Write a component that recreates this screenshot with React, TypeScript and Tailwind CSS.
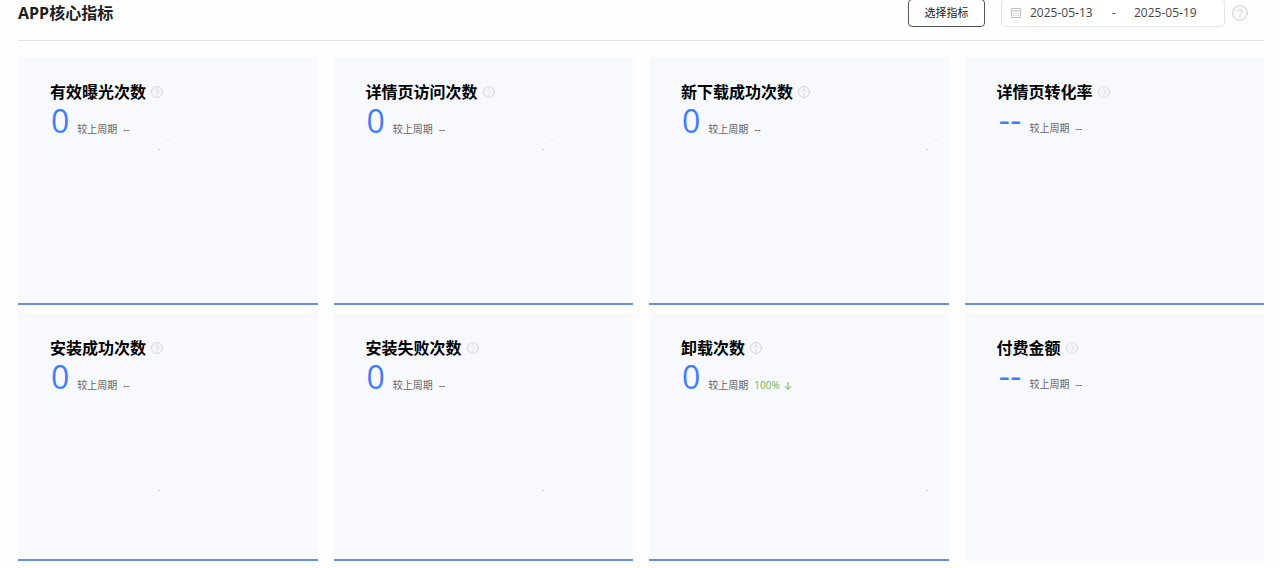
import React from 'react';

type Metric = {
  name: string;
  value: string;
  change: string;
  down?: boolean;
  hasLine: boolean;
};

const metrics: Metric[] = [
  { name: '有效曝光次数', value: '0', change: '--', hasLine: true },
  { name: '详情页访问次数', value: '0', change: '--', hasLine: true },
  { name: '新下载成功次数', value: '0', change: '--', hasLine: true },
  { name: '详情页转化率', value: '--', change: '--', hasLine: true },
  { name: '安装成功次数', value: '0', change: '--', hasLine: true },
  { name: '安装失败次数', value: '0', change: '--', hasLine: true },
  { name: '卸载次数', value: '0', change: '100%', down: true, hasLine: true },
  { name: '付费金额', value: '--', change: '--', hasLine: false },
];

function HelpIcon({ className }: { className: string }) {
  return (
    <svg
      viewBox="0 0 16 16"
      fill="none"
      stroke="currentColor"
      strokeLinecap="round"
      className={className}
      aria-hidden="true"
    >
      <circle cx="8" cy="8" r="7.3" />
      <path d="M5.8 6.4a2.2 2.2 0 1 1 3.5 1.8C8.4 8.8 8 9.1 8 10" />
      <path d="M8 11.9v.2" strokeWidth="1.3" />
    </svg>
  );
}

function CalendarIcon() {
  return (
    <svg
      viewBox="0 0 12 12"
      fill="none"
      stroke="currentColor"
      className="w-3 h-3 shrink-0 text-[#bfc2c8]"
      aria-hidden="true"
    >
      <path d="M1.5 1.5h9v9h-9zM1.5 4h9M3.5 .5v2M8.5 .5v2" />
      <path d="M3 6.5h6M3 8.5h6" strokeDasharray="1.2 1.2" />
    </svg>
  );
}

// Faint marks repeated over the whole page
function Watermark() {
  return (
    <svg className="absolute inset-0 w-full h-full pointer-events-none" aria-hidden="true">
      <defs>
        <pattern id="marks" width="384" height="341" patternUnits="userSpaceOnUse">
          <rect x="158" y="149" width="2" height="1" fill="#d4d6da" />
          <rect x="167" y="140" width="2" height="1" fill="#dcdee2" />
        </pattern>
      </defs>
      <rect width="100%" height="100%" fill="url(#marks)" />
    </svg>
  );
}

function MetricCard({ metric }: { metric: Metric }) {
  const empty = metric.value === '--';

  return (
    <section
      className={`h-62 bg-[#f7f9fd] pl-8 pt-6 border-b-2 ${
        metric.hasLine ? 'border-[#6690e8]' : 'border-[#f7f9fd]'
      }`}
    >
      <div className="flex items-center gap-[5px] h-[22px]">
        <h2 className="text-base leading-[22px] font-bold text-black">{metric.name}</h2>
        <button type="button" aria-label={`${metric.name}说明`} className="text-[#c6c8cc]">
          <HelpIcon className="block w-3 h-3" />
        </button>
      </div>
      <div className="flex items-baseline pl-px">
        <span
          className={`text-[32px] leading-9 text-[#3f7dfb] ${
            empty ? "pl-px font-['DejaVu_Sans',sans-serif]" : ''
          }`}
        >
          {metric.value}
        </span>
        <span className="ml-2 text-[10px] text-[#666]">较上周期</span>
        <span
          className={`flex items-center gap-1 ml-[6px] text-[10px] ${
            metric.down ? 'text-[#67b548]' : 'text-[#555]'
          }`}
        >
          {metric.change}
          {metric.down && (
            <svg viewBox="0 0 8 8" fill="none" stroke="currentColor" className="w-2 h-2" aria-hidden="true">
              <path d="M4 0v7.3M.8 4.2 4 7.4l3.2-3.2" />
            </svg>
          )}
        </span>
      </div>
    </section>
  );
}

export default function App() {
  return (
    <main className="relative bg-[#fefefe] pl-[18px] pr-4 pb-2 font-['Open_Sans','Noto_Sans_CJK_SC',sans-serif]">
      <header className="flex items-start justify-between h-[41px] border-b border-[#e2e2e2]">
        <h1 className="text-base leading-[26px] font-bold text-[#1c1c1c]">APP核心指标</h1>
        <div className="flex items-center -mt-px text-xs text-[#444]">
          <button
            type="button"
            className="h-7 w-[77px] rounded-[4px] border border-[#555] bg-white text-[11px] text-[#222] mr-4"
          >
            选择指标
          </button>
          <div className="flex items-center h-7 w-56 rounded-[4px] border border-[#e4e5ea] bg-white px-2">
            <CalendarIcon />
            <input
              type="text"
              aria-label="开始日期"
              defaultValue="2025-05-13"
              className="w-16 ml-2 outline-none"
            />
            <span className="w-10 text-center">-</span>
            <input
              type="text"
              aria-label="结束日期"
              defaultValue="2025-05-19"
              className="w-16 outline-none"
            />
          </div>
          <button type="button" aria-label="说明" className="ml-[7px] mr-4 text-[#c6c8cc]">
            <HelpIcon className="block w-4 h-4" />
          </button>
        </div>
      </header>
      <div className="grid grid-cols-4 gap-x-4 gap-y-2 mt-4">
        {metrics.map((metric) => (
          <MetricCard key={metric.name} metric={metric} />
        ))}
      </div>
      <Watermark />
    </main>
  );
}
